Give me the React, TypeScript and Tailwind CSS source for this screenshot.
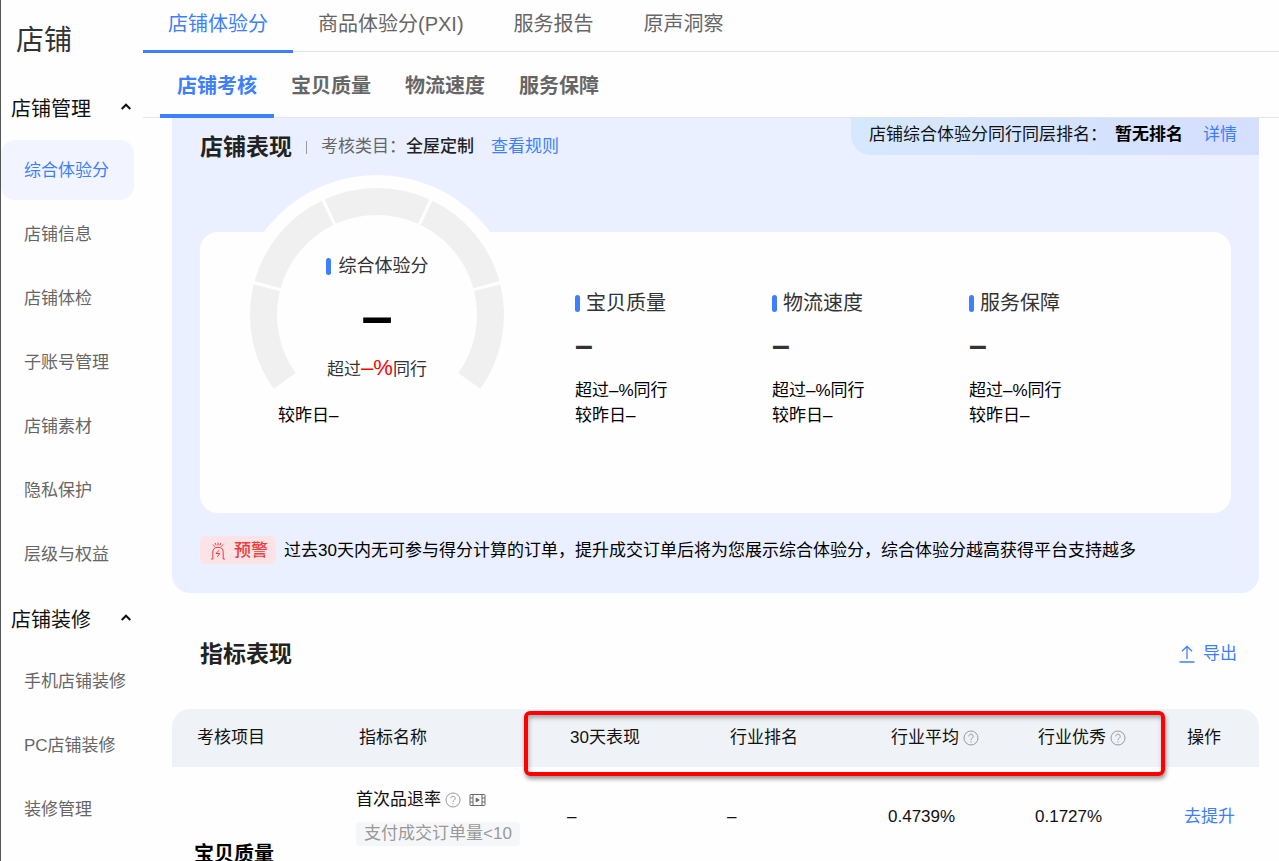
import { useState } from 'react';

const sections = [
  {
    title: '店铺管理',
    items: ['综合体验分', '店铺信息', '店铺体检', '子账号管理', '店铺素材', '隐私保护', '层级与权益'],
  },
  { title: '店铺装修', items: ['手机店铺装修', 'PC店铺装修', '装修管理'] },
];

const mainTabs = ['店铺体验分', '商品体验分(PXI)', '服务报告', '原声洞察'];
const subTabs = ['店铺考核', '宝贝质量', '物流速度', '服务保障'];
const metrics = ['宝贝质量', '物流速度', '服务保障'];

const columns = [
  { label: '考核项目', width: 'w-[162px]' },
  { label: '指标名称', width: 'w-[211px]' },
  { label: '30天表现', width: 'w-[160px]' },
  { label: '行业排名', width: 'w-[161px]' },
  { label: '行业平均', width: 'w-[147px]', help: true },
  { label: '行业优秀', width: 'w-[149px]', help: true },
  { label: '操作', width: '' },
];

const HelpIcon = () => (
  <svg width="16" height="16" viewBox="0 0 16 16" fill="none" stroke="#9a9a9a" className="shrink-0">
    <circle cx="8" cy="8" r="7" />
    <path d="M5.8 6.4a2.2 2.2 0 1 1 3.4 1.8C8.4 8.7 8 9 8 10" />
    <path d="M8 11.2v1.2" />
  </svg>
);

const VideoIcon = () => (
  <svg width="17" height="14" viewBox="0 0 17 14" fill="none" stroke="#666" className="ml-1 shrink-0">
    <rect x="1" y="1.5" width="15" height="11" rx="1" />
    <path d="M4 1.5v11M13 1.5v11M1 5h3M1 9h3M13 5h3M13 9h3" />
    <path d="M7.2 5.2v3.6L10.2 7z" fill="#666" />
  </svg>
);

const AlarmIcon = () => (
  <svg width="16" height="18" viewBox="0 0 16 18" fill="none" stroke="#ee3b3b" strokeLinecap="round">
    <path d="M1.5 17h1.300V10C2.800 7 4.500 5.300 8 5.300S13.200 7 13.200 10v7h1.300" />
    <path d="M8.800 8.500 6 11.500h3.800L7.500 14.500" />
    <path d="M8 1v2M5.300 1.300 6 3M10.700 1.300 10 3M3.200 2.800l1.400 1.600M12.800 2.800l-1.400 1.600" />
  </svg>
);

const ExportIcon = () => (
  <svg width="16" height="18" viewBox="0 0 16 18" fill="none" stroke="#3d7fff" strokeWidth="1.3">
    <path d="M8 14V1.5M3 6.300l5-5 5 5M.5 17h15" />
  </svg>
);

const point = (radius: number, deg: number) => {
  const rad = (deg * Math.PI) / 180;
  return `${141 + radius * Math.cos(rad)} ${140 + radius * Math.sin(rad)}`;
};

// five equal segments over 251 degrees, with a thin gap between neighbours
const Gauge = () => (
  <svg viewBox="0 0 282 282" className="col-start-1 row-start-1 w-full">
    <circle cx="141" cy="141" r="141" fill="#fefefe" />
    {[0, 1, 2, 3, 4].map((i) => {
      const from = 144.5 + i * 50.2 + (i === 0 ? 0 : 0.8);
      const to = 144.5 + (i + 1) * 50.2 - (i === 4 ? 0 : 0.8);
      return (
        <path
          key={i}
          d={`M${point(113.5, from)}A113.5 113.5 0 0 1 ${point(113.5, to)}`}
          fill="none"
          stroke="#f0f0f0"
          strokeWidth="27"
        />
      );
    })}
  </svg>
);

const App = () => {
  const [activeItem, setActiveItem] = useState('综合体验分');
  const [mainTab, setMainTab] = useState('店铺体验分');
  const [subTab, setSubTab] = useState('店铺考核');

  return (
    <div className="flex h-screen overflow-hidden border-l border-[#555] bg-[#fefefe] font-['Liberation_Sans','Noto_Sans_CJK_SC',sans-serif] text-[17px] leading-6 text-[#111]">
      <aside className="w-[142px] shrink-0">
        <h1 className="flex h-[76px] items-center pt-1.5 pl-[15px] text-[28px] text-[#333]">店铺</h1>
        {sections.map((section) => (
          <nav key={section.title} aria-label={section.title} className="mb-[3px]">
            <button className="flex h-16 w-full items-center justify-between pt-0.5 pr-3 pl-2.5 text-[20px]">
              {section.title}
              <svg width="10" height="7" viewBox="0 0 10 7" fill="none" stroke="#111" strokeWidth="2" className="mb-1.5">
                <path d="M.7 6 5 1.7 9.3 6" />
              </svg>
            </button>
            <ul className="flex flex-col gap-1">
              {section.items.map((item) => (
                <li key={item}>
                  <button
                    onClick={() => setActiveItem(item)}
                    className={`h-[60px] w-[133px] rounded-[14px] pt-0.5 pl-[23px] text-left whitespace-nowrap ${
                      item === activeItem ? 'bg-[#f2f5ff] text-[#3d7fff]' : 'text-[#666]'
                    }`}
                  >
                    {item}
                  </button>
                </li>
              ))}
            </ul>
          </nav>
        ))}
      </aside>

      <main className="min-w-0 flex-1">
        <nav className="flex h-[52px] border-b border-[#dfe3ea] text-[20px]">
          {mainTabs.map((tab) => (
            <button
              key={tab}
              onClick={() => setMainTab(tab)}
              className={`h-[53px] border-b-3 px-[25px] pb-0.5 ${
                tab === mainTab ? 'border-[#3d7fff] text-[#3d7fff]' : 'border-transparent text-[#666]'
              }`}
            >
              {tab}
            </button>
          ))}
        </nav>
        <nav className="flex h-[66px] border-b border-[#e3e5ea] pl-[17px] text-[20px] font-bold">
          {subTabs.map((tab) => (
            <button
              key={tab}
              onClick={() => setSubTab(tab)}
              className={`h-[66px] border-b-4 px-[17px] pt-1.5 ${
                tab === subTab ? 'border-[#3d7fff] text-[#3d7fff]' : 'border-transparent text-[#666]'
              }`}
            >
              {tab}
            </button>
          ))}
        </nav>

        <div className="pr-5 pl-[29px]">
          <section className="rounded-b-[18px] bg-[#eaf0ff] pb-[29px]">
            <div className="flex h-[114px] items-start justify-between pl-7">
              <div className="flex items-center pt-[13px]">
                <h2 className="text-[23px] leading-8 font-bold text-[#222]">店铺表现</h2>
                <span className="mx-[14px] h-[13px] w-px bg-[#999]" />
                <span className="text-[#666]">考核类目：</span>
                <span className="font-medium text-[#222]">全屋定制</span>
                <a href="#rules" className="ml-[17px] text-[#3d7fff]">
                  查看规则
                </a>
              </div>
              <div className="flex h-[37px] items-center rounded-bl-[20px] bg-linear-to-r from-[#d5e8fd] to-[#d5dffe] pr-[22px] pb-1 pl-[18px]">
                店铺综合体验分同行同层排名：
                <b className="ml-2 text-black">暂无排名</b>
                <a href="#rank" className="ml-5 text-[#3d7fff]">
                  详情
                </a>
              </div>
            </div>

            <div className="mx-7 flex h-[281px] rounded-[18px] bg-[#fefefe]">
              <div className="-mt-[57px] ml-9 grid h-[282px] w-[282px] shrink-0">
                <Gauge />
                <div className="col-start-1 row-start-1 flex flex-col items-center pt-[79px] text-[#333]">
                  <h3 className="flex items-center gap-2 text-[18px]">
                    <span className="h-[17px] w-[5px] rounded-sm bg-[#3d7fff]" />
                    综合体验分
                  </h3>
                  <strong className="mt-3 text-[56px] leading-[52px] text-black">–</strong>
                  <p className="mt-[14px]">
                    超过<span className="text-[22px]/6 text-[#ff0000]">–%</span>同行
                  </p>
                  <p className="mt-[22px] self-start pl-[42px] text-black">较昨日–</p>
                </div>
              </div>
              <div className="ml-[57px] flex pt-[59px]">
                {metrics.map((name) => (
                  <div key={name} className="w-[197px]">
                    <h3 className="flex items-center gap-[6px] text-[20px] text-[#333]">
                      <span className="h-[17px] w-[5px] rounded-sm bg-[#3d7fff]" />
                      {name}
                    </h3>
                    <strong className="mt-3 block text-[32px] leading-9 text-[#333]">–</strong>
                    <p className="mt-[15px] leading-[25px] text-black">
                      超过–%同行
                      <br />
                      较昨日–
                    </p>
                  </div>
                ))}
              </div>
            </div>

            <div className="mt-[23px] flex items-center pl-7">
              <span className="flex h-7 items-center gap-2 rounded-md bg-[#fce3e5] pt-0.5 pr-2 pl-2.5 font-medium text-[#ee3b3b]">
                <AlarmIcon />
                预警
              </span>
              <p className="ml-2 pt-0.5 whitespace-nowrap text-black">
                过去30天内无可参与得分计算的订单，提升成交订单后将为您展示综合体验分，综合体验分越高获得平台支持越多
              </p>
            </div>
          </section>

          <div className="flex h-[116px] items-center justify-between pt-1.5 pr-[22px] pl-7">
            <h2 className="text-[23px] font-bold text-[#222]">指标表现</h2>
            <button className="flex items-center gap-2 text-[#3d7fff]">
              <ExportIcon />
              导出
            </button>
          </div>

          <div className="relative">
            <table className="w-full table-fixed text-left">
              <thead>
                <tr className="h-[58px] bg-[#eff3f7]">
                  {columns.map((col) => (
                    <th
                      key={col.label}
                      className={`pl-[25px] font-normal first:rounded-tl-[18px] last:rounded-tr-[18px] ${col.width}`}
                    >
                      <span className="flex items-center gap-1 whitespace-nowrap">
                        {col.label}
                        {col.help && <HelpIcon />}
                      </span>
                    </th>
                  ))}
                </tr>
              </thead>
              <tbody>
                <tr className="h-[100px]">
                  <th className="pl-[22px] align-bottom text-[20px] leading-[26px] font-bold text-black">宝贝质量</th>
                  <td className="pl-[22px]">
                    <div className="flex items-center gap-1 whitespace-nowrap">
                      首次品退率
                      <HelpIcon />
                      <VideoIcon />
                    </div>
                    <span className="mt-[10px] inline-block rounded bg-[#f5f6f8] px-2 leading-6 whitespace-nowrap text-[#999]">
                      支付成交订单量&lt;10
                    </span>
                  </td>
                  <td className="pl-[22px]">–</td>
                  <td className="pl-[22px]">–</td>
                  <td className="pl-[22px]">0.4739%</td>
                  <td className="pl-[22px]">0.1727%</td>
                  <td className="pl-[22px]">
                    <a href="#improve" className="text-[#3d7fff]">
                      去提升
                    </a>
                  </td>
                </tr>
              </tbody>
            </table>
            <div className="pointer-events-none absolute top-0.5 right-[94px] left-[352px] h-[65px] rounded-md border-4 border-[#ff0000] shadow-[1px_3px_4px_rgba(0,0,0,0.4),inset_1px_3px_4px_rgba(0,0,0,0.3)]" />
          </div>
        </div>
      </main>
    </div>
  );
};

export default App;
